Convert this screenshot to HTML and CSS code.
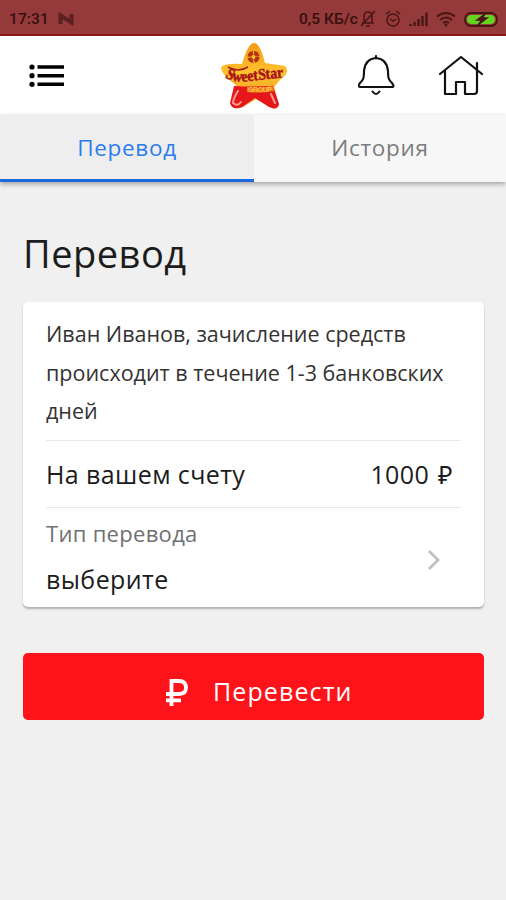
FILE: index.html
```html
<!DOCTYPE html>
<html lang="ru">
<head>
<meta charset="utf-8">
<title>Перевод</title>
<link rel="stylesheet" href="styles.css">
</head>
<body>
<div class="status">
  <span class="time">17:31</span>
  <svg class="nfc" width="17" height="14" viewBox="0 0 17 14"><path d="M2.500 12V3.500L13.500 10.500V2" fill="none" stroke="#5b2020" stroke-width="4"/></svg>
  <span class="speed">0,5 КБ/с</span>
  <svg class="status-icons" width="144" height="22" viewBox="0 0 144 22" fill="none" stroke="#481515" stroke-width="1.500">
    <path d="M4 15h12M6 15V9q0-5 4-5t4 5v6M8 18h4M3 18L17 3"/>
    <circle cx="35" cy="12" r="6"/><path d="M32 11l3 2 3-2M28 6l4-3M42 6l-4-3"/>
    <path d="M52.500 18v-2M56.500 18v-4M60.500 18v-7M64.500 18v-10M68.500 18V4.500" stroke-width="2.300"/>
    <path d="M79 8.500q9-7 18 0M82 12q6-5 12 0M85 15q3-2.500 6 0" stroke-width="2"/><circle cx="88" cy="17" r="1.500" fill="#481515" stroke="none"/>
    <rect x="107" y="5" width="32" height="13" rx="6" stroke-width="1.800"/><rect x="109" y="7" width="28" height="9" rx="4.500" fill="#63d31f" stroke="none"/>
    <path d="M127 6l-8 6h5l-4 5 9-7h-5z" fill="#481515" stroke="#481515"/>
  </svg>
</div>
<header>
  <svg class="menu" width="36" height="24" viewBox="0 0 36 24"><g><circle cx="3" cy="3" r="2.600"/><circle cx="3" cy="11.700" r="2.600"/><circle cx="3" cy="20.300" r="2.600"/></g><path d="M8.500 3H35M8.500 11.700H35M8.500 20.300H35" stroke="#000" stroke-width="3.600"/></svg>
  <svg class="logo" width="70" height="68" viewBox="0 0 70 68">
    <defs>
      <linearGradient id="gold" x2="0" y2="1"><stop stop-color="#f49b16"/><stop offset=".45" stop-color="#ffc22d"/><stop offset="1" stop-color="#f39822"/></linearGradient>
      <path id="arc" d="M6 35q8 6 21 4.500T67 35"/>
    </defs>
    <path d="M35 1q6 0 11 20l20 3q6 6-5 14l-6 7 5 18q-2 6-9 2l-14-8-13 8q-10 4-12-4l5-18Q-1 30 3 24q7-3 20-2Q29 1 35 1z" fill="url(#gold)"/>
    <path d="M15 44q19 1 39 0l6 18q-2 7-10 3l-14-9-13 9q-10 4-12-4z" fill="#e5161c"/>
    <path d="M28 45q12 3 26-2l2 6q-14 3-28 1z" fill="#f0741c"/>
    <path d="M19 49q-5 8-5 12q4 4 8-1M52 52l4 9" stroke="#ff9d8d" stroke-width="2" stroke-linecap="round" fill="none"/>
    <circle cx="34.500" cy="15" r="4" fill="#ffc22d" stroke="#b53316" stroke-width="4" stroke-dasharray="5.200 1.080"/>
    <path d="M9 25q10 6 20 0" stroke="#ad1714" stroke-width="1.500" fill="none"/>
    <text class="brand"><textPath href="#arc" textLength="60" lengthAdjust="spacingAndGlyphs">SweetStar</textPath></text>
    <text class="group" x="29" y="50" textLength="24">GROUP</text>
  </svg>
  <svg class="bell" width="38" height="44" viewBox="0 0 38 44" fill="none" stroke="#111" stroke-width="2.100" stroke-linecap="round" stroke-linejoin="round"><path d="M18 5q11 1 12 13c0 8 1 9 4 12 3 4 1 4-1 4H3c-2 0-4 0-1-4 3-3 4-4 4-12Q7 6 18 5zM18 5V3M14.500 38.500q3.500 5 7 0"/></svg>
  <svg class="home" width="46" height="42" viewBox="0 0 46 42" fill="none" stroke="#111" stroke-width="2.200" stroke-linecap="round" stroke-linejoin="round"><path d="M2 19L23 2l21 17M7 16v23h11V27h9v12h9q3 0 3-3V8"/></svg>
</header>
<nav><div class="tab active"><span>Перевод</span></div><div class="tab"><span>История</span></div></nav>
<main>
  <h1>Перевод</h1>
  <section class="card">
    <p>Иван Иванов, зачисление средств<br>происходит в течение 1-3 банковских<br>дней</p>
    <div class="balance"><span>На вашем счету</span><span class="amount">1000 ₽</span></div>
    <div class="choice"><div><div class="label">Тип перевода</div><div class="value">выберите</div></div>
      <svg width="14" height="22" viewBox="0 0 14 22"><path d="M2 2l9 9-9 9" fill="none" stroke="#bdbdbd" stroke-width="2.700"/></svg></div>
  </section>
  <button><svg width="22" height="28" viewBox="0 0 22 28"><path d="M5.500 27V2H13q7 0 7 6.500T13 15H0M0 21.300h15" fill="none" stroke="#fff" stroke-width="3.800"/></svg><span>Перевести</span></button>
</main>
</body>
</html>
```
FILE: styles.css
```css
* { box-sizing: border-box; }
body { margin: 0; height: 900px; overflow: hidden; background: #f0f0f0; color: #1c1c1c; font-family: "Open Sans", "Noto Sans", sans-serif; font-weight: 400; }
svg { display: block; flex: none; }
.status { height: 36px; padding: 3px 4px 0 9px; display: flex; align-items: center; background: #943a3a; border-bottom: 2px solid #8e1518; color: #351010; font: 500 15.500px/20px Roboto, sans-serif; }
.time { width: 40px; letter-spacing: .1px; }
.nfc { margin-left: 9px; }
.speed { margin-left: auto; width: 59px; white-space: nowrap; font-size: 15.500px; }
header { height: 79px; background: #fff; display: flex; align-items: center; padding: 0 21px 0 29px; }
.menu { margin-top: 1px; }
.logo { margin-left: 154px; }
.brand { font: bold 16px "Liberation Serif", serif; fill: #a91217; stroke: #a91217; stroke-width: .5px; }
.group { font: bold 7px "Liberation Sans", sans-serif; fill: #ffc445; }
.bell { margin-left: 69px; margin-top: -1px; }
.home { margin-left: 42px; }
nav { height: 67px; display: grid; grid-template-columns: 254px 1fr; box-shadow: 0 2px 5px #0005; position: relative; }
.tab { background: #f7f7f7; color: #7c7c7c; display: flex; align-items: center; justify-content: center; font-size: 22.500px; letter-spacing: .7px; padding-bottom: 2px; }
.tab.active { background: #eee; color: #2b7ded; border-bottom: 3px solid #1b67dd; padding-bottom: 0; }
main { padding: 38px 22px 0 23px; }
h1 { margin: 0 0 16px; font-size: 38px; line-height: 66px; font-weight: 400; letter-spacing: .5px; }
.card { height: 305px; background: #fff; border-radius: 5px; padding: 13px 23px 0; box-shadow: 0 2px 2px #0004; }
.card p { margin: 0; height: 126px; font-size: 21.500px; line-height: 38.500px; white-space: nowrap; border-bottom: 1px solid #e9e9e9; color: #333; }
.balance { height: 67px; display: flex; align-items: center; justify-content: space-between; padding-right: 8px; border-bottom: 1px solid #e9e9e9; font-size: 25px; letter-spacing: .4px; }
.amount { word-spacing: 2px; }
.choice { display: flex; justify-content: space-between; align-items: center; padding: 3px 20px 0 0; }
.choice svg { margin-top: 6px; }
.label { font-size: 22px; line-height: 45px; letter-spacing: .3px; color: #707070; }
.value { font-size: 25px; line-height: 46px; letter-spacing: .4px; }
button { width: 100%; height: 67px; margin-top: 46px; border: 0; border-radius: 5px; background: #ff131b; color: #fff; display: flex; align-items: center; padding: 13px 0 0 143px; gap: 25px; font: 25px "Open Sans", sans-serif; letter-spacing: 1.100px; }
button span { margin-top: -4px; }
```
